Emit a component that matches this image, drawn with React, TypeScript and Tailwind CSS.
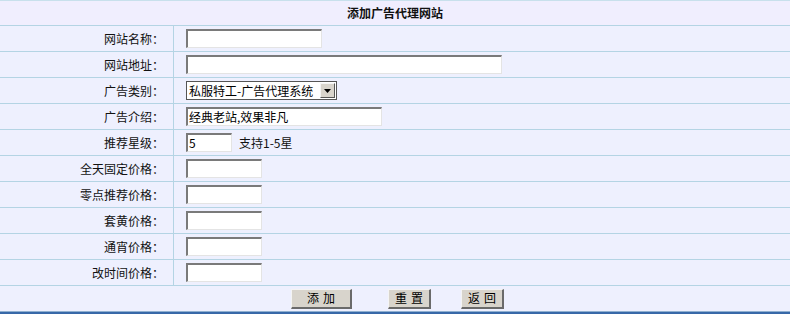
import React from 'react';

const font = { fontFamily: '"SimSun", "Noto Sans CJK SC", sans-serif' };

function Field({ w, value }: { w: string; value?: string }) {
  return (
    <div
      className={`h-[19px] ${w} bg-white border-t-2 border-l-2 border-t-[#7a7a7a] border-l-[#7a7a7a] border-b border-r border-b-[#e4e4e4] border-r-[#e4e4e4] text-[12px] leading-[15px] px-[1px] text-black`}
    >
      {value}
    </div>
  );
}

function Row({ label, children }: { label: string; children: React.ReactNode }) {
  return (
    <div className="flex h-[26px] border-b border-[#b4d4e4]">
      <div className="w-[174px] border-r border-[#b4d4e4] flex items-center justify-end pr-[9px] text-[12px] text-[#111]">
        {label}
      </div>
      <div className="flex items-center pl-[12px] gap-[7px] text-[12px] text-[#111]">{children}</div>
    </div>
  );
}

function Btn({ label, w }: { label: string; w: string }) {
  return (
    <button
      className={`h-[20px] ${w} bg-[#d8d4cc] border-t border-l border-t-[#f4f4f4] border-l-[#f4f4f4] border-b-2 border-r-2 border-b-[#6a6a6a] border-r-[#6a6a6a] text-[12px] leading-none text-black tracking-[4px] pl-[4px]`}
    >
      {label}
    </button>
  );
}

export default function App() {
  return (
    <div className="w-[790px] h-[314px] bg-[#eef0fe] overflow-hidden" style={font}>
      <div className="h-[1px] bg-[#c8e0ec]" />
      <div className="h-[25px] flex items-center justify-center border-b border-[#b4d4e4] bg-[#f0eefe] text-[12px] font-bold text-[#111]">
        添加广告代理网站
      </div>
      <Row label="网站名称：">
        <Field w="w-[136px]" />
      </Row>
      <Row label="网站地址：">
        <Field w="w-[316px]" />
      </Row>
      <Row label="广告类别：">
        <div className="h-[19px] w-[151px] bg-white border border-[#555] flex items-center">
          <span className="flex-1 text-[12px] text-black pl-[2px] whitespace-nowrap overflow-hidden">私服特工-广告代理系统</span>
          <span className="w-[15px] h-[15px] mr-[1px] bg-[#d8d4cc] border border-t-[#f4f4f4] border-l-[#f4f4f4] border-b-[#555] border-r-[#555] flex items-center justify-center">
            <svg width="7" height="4" viewBox="0 0 7 4">
              <path d="M0 0h7L3.5 4z" fill="#000" />
            </svg>
          </span>
        </div>
      </Row>
      <Row label="广告介绍：">
        <Field w="w-[196px]" value="经典老站,效果非凡" />
      </Row>
      <Row label="推荐星级：">
        <Field w="w-[46px]" value="5" />
        <span>支持1-5星</span>
      </Row>
      <Row label="全天固定价格：">
        <Field w="w-[76px]" />
      </Row>
      <Row label="零点推荐价格：">
        <Field w="w-[76px]" />
      </Row>
      <Row label="套黄价格：">
        <Field w="w-[76px]" />
      </Row>
      <Row label="通宵价格：">
        <Field w="w-[76px]" />
      </Row>
      <Row label="改时间价格：">
        <Field w="w-[76px]" />
      </Row>
      <div className="h-[25px] flex items-center pl-[291px]">
        <Btn label="添加" w="w-[61px]" />
        <div className="w-[36px]" />
        <Btn label="重置" w="w-[43px]" />
        <div className="w-[30px]" />
        <Btn label="返回" w="w-[43px]" />
      </div>
      <div className="h-[1px] bg-[#90b0d0]" />
      <div className="h-[2px] bg-[#3868a8]" />
    </div>
  );
}
